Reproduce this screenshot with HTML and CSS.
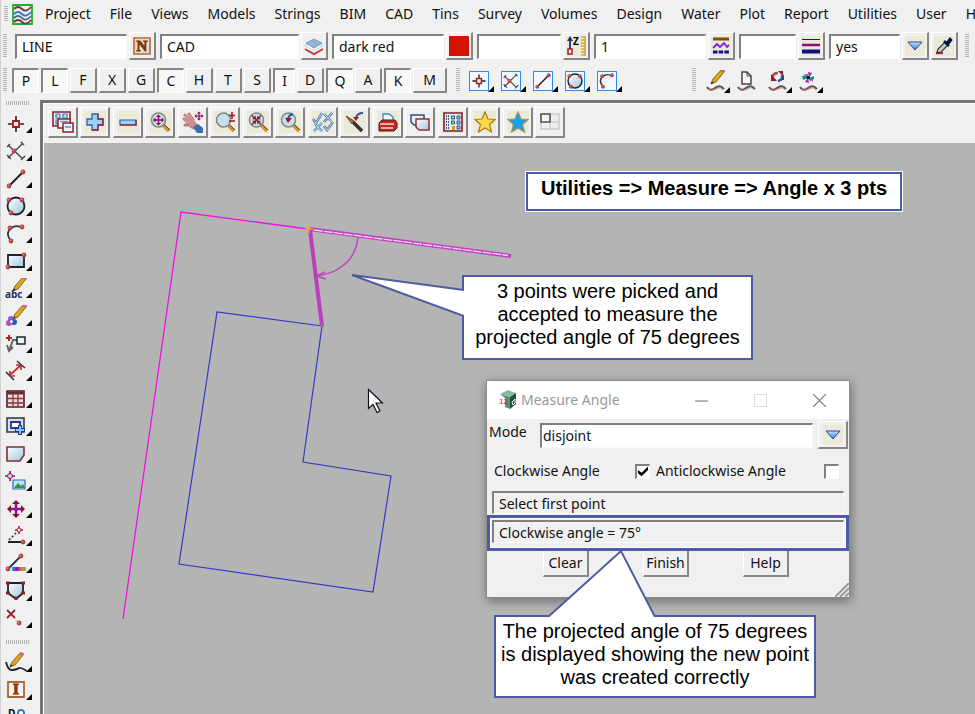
FILE: index.html
```html
<!DOCTYPE html>
<html lang="en">
<head>
<meta charset="utf-8">
<title>Measure Angle</title>
<link rel="stylesheet" href="styles.css">
</head>
<body>
<svg class="sprite" aria-hidden="true">
  <defs>
    <linearGradient id="sky" x1="0" y1="0" x2="1" y2="1"><stop offset="0" stop-color="#fff"/><stop offset="1" stop-color="#9cc4dc"/></linearGradient>
    <linearGradient id="blue" x1="0" y1="0" x2="0" y2="1"><stop offset="0" stop-color="#c4e0ff"/><stop offset="1" stop-color="#3a78e0"/></linearGradient>
    <linearGradient id="rainbow"><stop offset="0" stop-color="#20a0ff"/><stop offset=".35" stop-color="#6020c0"/><stop offset=".6" stop-color="#ff5060"/><stop offset="1" stop-color="#40e060"/></linearGradient>
    <g id="pencil"><path d="M2 15l2-5 8-9 3 2-8 10z" fill="#e0a818" stroke="#6a4a10" stroke-width=".8"/><path d="M11 2l1.500-2 4 1.500-2 3z" fill="#d06a70"/><path d="M2 15l.6-2.500 2 1z" fill="#222"/></g>
    <g id="dot"><circle r="2.400" fill="#b04048"/><circle cx="-.6" cy="-.6" r=".9" fill="#d88a8a"/></g>
    <g id="lens"><path d="M14 14l6 6" stroke="#d09030" stroke-width="3.500"/><path d="M15 13l6 6" stroke="#604020" stroke-width="1"/><circle cx="9.500" cy="9" r="7" fill="#c9dfe8" stroke="#7a8a90" stroke-width="1.600"/></g>
    <g id="wave"><path d="M0 3q3 5 8 1t9 1" fill="none" stroke="#555" stroke-width="2"/><path d="M1 5q3 3 8 0t7 1" fill="none" stroke="#d08080" stroke-width="1"/></g>
    <g id="arrows4"><path d="M-7 0h14M0-7v14" stroke-width="2.500" stroke="#8a1090"/><path d="M-9 0l4-4v8zM9 0l-4-4v8zM0-9l-4 4h8zM0 9l-4-4h8z" fill="#901030"/></g>
  </defs>
  <symbol id="i-logo" viewBox="0 0 21 21"><path fill="#e4f4f2" stroke="#20b030" stroke-width="1.800" d="M1 1h19v19H1z"/><g fill="none" stroke-width="1.800"><path stroke="#803038" d="M2 5q4-4 8 0t9-2M2 18q4-4 8 0t9-2"/><path stroke="#4070c0" d="M2 10q4-4 8 0t9-2"/><path stroke="#507088" d="M2 14q4-4 8 0t9-2"/></g></symbol>
  <symbol id="i-name" viewBox="0 0 20 20"><path fill="#e8eef0" stroke="#b5652f" stroke-width="1.600" d="M2 2h16v16H2z"/><path fill="none" stroke="#e0c8b8" d="M4 4h12v12H4z"/></symbol>
  <symbol id="i-layers" viewBox="0 0 20 20"><path fill="#fff" d="M1 13l9-4 9 4-9 5z"/><path fill="none" stroke="#d0303a" stroke-width="2" d="M1 13l9 5 9-5"/><path fill="#f0f8ff" stroke="#c0d4e8" d="M1 10l9-4 9 4-9 5z"/><path fill="#93b4d8" stroke="#7e9bbd" d="M2 7l8-4 8 4-8 5z"/></symbol>
  <symbol id="i-red" viewBox="0 0 20 20"><path fill="#d41200" d="M0 0h20v20H0z"/></symbol>
  <symbol id="i-height" viewBox="0 0 20 20"><path d="M4 3v10" stroke="#1b3380" stroke-width="1.800"/><path d="M4 0L1 5h6z" fill="#1b3380"/><path d="M2 13h4v5H2z" fill="#fff" stroke="#a02020" stroke-width="1.500"/><path d="M15 0h4v20h-4z" fill="#ffe9a0"/><path d="M19 0v20M15 1h3M15 4h3M15 7h3M15 10h3M15 13h3M15 16h3M15 19h3" stroke="#b88a20" stroke-width="1.200"/></symbol>
  <symbol id="i-linestyle" viewBox="0 0 20 20"><path d="M2 3h16" stroke="#8b4a10" stroke-width="3"/><path d="M2 12l4-4 3 3 4-4 3 4 2-2" fill="none" stroke="#7d1cf0" stroke-width="1.800"/><path d="M2 16h16" stroke="#101090" stroke-width="3" stroke-dasharray="4.500 1.200"/></symbol>
  <symbol id="i-weight" viewBox="0 0 20 20"><path d="M1 3.500h18" stroke="#222"/><path d="M1 9h18" stroke="#8a0a80" stroke-width="2.500"/><path d="M1 15.500h18" stroke="#101080" stroke-width="4"/></symbol>
  <symbol id="i-down" viewBox="0 0 20 20"><path d="M3 6h14l-7 8z" fill="url(#blue)" stroke="#28489c"/></symbol>
  <symbol id="i-dropper" viewBox="0 0 20 20"><path d="M2 17h7" stroke="#c03030" stroke-width="2.500"/><path d="M3 17l1-4 7-7 3 3-7 7z" fill="#b8d0d8" stroke="#333" stroke-width="1.200"/><path d="M10 5l5 5M13 7l3-4 1 1-3 4z" stroke="#101040" stroke-width="2.500" fill="#101040"/></symbol>

  <symbol id="i-point" viewBox="0 0 22 22"><path d="M11 3v16M3 11h16" stroke="#222" stroke-width="1.600"/><path fill="#f4f4f4" stroke="#a81818" stroke-width="1.800" d="M8 8h6v6H8z"/></symbol>
  <symbol id="i-cross" viewBox="0 0 22 22"><path d="M3 5l15 14M18 3L3 18M2 7l3-3M16 2l3 3M2 15l4 4M16 20l4-4" stroke="#444" stroke-width="1.400"/><use href="#dot" x="9" y="11"/></symbol>
  <symbol id="i-line" viewBox="0 0 22 22"><path d="M4 18L18 4" stroke="#222" stroke-width="2"/><use href="#dot" x="4" y="18"/><use href="#dot" x="18" y="4"/></symbol>
  <symbol id="i-circle" viewBox="0 0 22 22"><circle cx="11" cy="11" r="8.500" fill="url(#sky)" stroke="#222" stroke-width="1.800"/><use href="#dot" x="4" y="5"/><use href="#dot" x="17" y="5"/><use href="#dot" x="6" y="18"/></symbol>
  <symbol id="i-arc" viewBox="0 0 22 22"><path d="M6 18Q-1 9 8 4q5-2 9 1z" fill="#e8f2fa"/><path d="M6 18Q-1 9 8 4q5-2 9 1" fill="none" stroke="#333" stroke-width="1.800"/><use href="#dot" x="6" y="18"/><use href="#dot" x="5" y="5"/><use href="#dot" x="17" y="4"/></symbol>
  <symbol id="i-rect" viewBox="0 0 22 22"><path d="M3 5h16v12H3z" fill="url(#sky)" stroke="#222" stroke-width="1.800"/><use href="#dot" x="3" y="17"/><use href="#dot" x="19" y="5"/></symbol>
  <symbol id="i-text" viewBox="0 0 22 22"><g transform="translate(6 -2)"><use href="#pencil"/></g></symbol>
  <symbol id="i-paint" viewBox="0 0 22 22"><g transform="translate(6 -1)"><use href="#pencil"/></g><circle cx="6" cy="14" r="3" fill="#8060e0"/><circle cx="9" cy="17" r="3" fill="#3050c0"/><circle cx="4" cy="18" r="3" fill="#b050c0"/><circle cx="6.500" cy="16.500" r="1.500" fill="#fff"/></symbol>
  <symbol id="i-leader" viewBox="0 0 22 22"><path d="M4 2v6M1 5h6" stroke="#b02030" stroke-width="2"/><path d="M12 7H8l-4 11M2 12l2 6 4-4" fill="none" stroke="#666" stroke-width="2"/><path d="M12 4h8v7h-8z" fill="#e4f2f8" stroke="#222" stroke-width="1.500"/></symbol>
  <symbol id="i-dim" viewBox="0 0 22 22"><path d="M1 12l8 8M12 1l8 7" stroke="#333" stroke-width="1.600"/><path d="M5 15L16 5M5 11v5h5M11 5h5v5" fill="none" stroke="#c03030" stroke-width="1.700"/></symbol>
  <symbol id="i-table" viewBox="0 0 22 22"><path d="M2 3h17v16H2z" fill="#eed8dc" stroke="#4a2028" stroke-width="1.600"/><path d="M2 5h17" stroke="#6a2830" stroke-width="3"/><path d="M8 6v13M13 6v13M2 10.500h17M2 15h17" stroke="#8a3540" stroke-width="1.300"/></symbol>
  <symbol id="i-frame" viewBox="0 0 22 22"><path d="M2 3h17v14H2z" fill="#cfe3ec" stroke="#333" stroke-width="1.500"/><path d="M6 7h9v6H6z" fill="#fff" stroke="#3030a0" stroke-width="1.800"/><path d="M15 10v10M10 15h10" stroke="#223c80" stroke-width="4"/><path d="M15 11v8M11 15h8" stroke="#80c8ff" stroke-width="2"/></symbol>
  <symbol id="i-poly" viewBox="0 0 22 22"><path d="M2 4h17v8l-4 6H2z" fill="url(#sky)" stroke="#803038" stroke-width="1.600"/></symbol>
  <symbol id="i-image" viewBox="0 0 22 22"><path d="M5 1v10M0 6h10" stroke="#902040" stroke-width="1.700"/><circle cx="5" cy="6" r="2.500" fill="#c0d0f0" stroke="#902040"/><path d="M8 10h12v9H8z" fill="#b8e4ff" stroke="#3868b0" stroke-width="1.200"/><path d="M9 18l4-5 3 3 2-2 2 4z" fill="#2a9a40"/></symbol>
  <symbol id="i-move" viewBox="0 0 22 22"><use href="#arrows4" x="11" y="11"/></symbol>
  <symbol id="i-bearing" viewBox="0 0 22 22"><path d="M3 17h15" stroke="#222" stroke-width="2"/><path d="M4 15l8-8" stroke="#222" stroke-width="1.500" stroke-dasharray="2 2"/><path d="M14 1v8M10 5h8" stroke="#a02030" stroke-width="1.500"/><circle cx="14" cy="5" r="2" fill="#fff" stroke="#a02030"/><use href="#dot" x="18" y="17"/></symbol>
  <symbol id="i-gradient" viewBox="0 0 22 22"><path d="M3 16L16 3" stroke="#333" stroke-width="1.800"/><use href="#dot" x="3" y="16"/><use href="#dot" x="16" y="3"/><path d="M7 14h14v4H7z" fill="url(#rainbow)"/></symbol>
  <symbol id="i-shield" viewBox="0 0 22 22"><path d="M3 3h15v10l-7 6-8-6z" fill="url(#sky)" stroke="#222" stroke-width="1.800"/><path d="M1 3h4M16 3h4M1 13h4M16 13h4M9 18h4" stroke="#902030" stroke-width="3"/></symbol>
  <symbol id="i-delpoint" viewBox="0 0 22 22"><path d="M2 2l8 8M10 2l-8 8" stroke="#a02030" stroke-width="1.800"/><path d="M8 9l6 6" stroke="#888" stroke-dasharray="1 1"/><use href="#dot" x="14" y="15"/></symbol>
  <symbol id="i-sketch" viewBox="0 0 22 22"><g transform="translate(3 0)"><use href="#pencil"/></g><path d="M1 10q2 9 7 8t6-2 8 3" fill="none" stroke="#222" stroke-width="1.800"/></symbol>
  <symbol id="i-insert" viewBox="0 0 22 22"><path d="M3 3h16v15H3z" fill="#eef6f8" stroke="#b5652f" stroke-width="1.800"/></symbol>

  <symbol id="i-wpencil" viewBox="0 0 22 22"><g transform="translate(3 -1)"><use href="#pencil"/></g><use href="#wave" x="1" y="14"/></symbol>
  <symbol id="i-wpage" viewBox="0 0 22 22"><path d="M5 2h5l4 4v8H5z" fill="#f4f8fa" stroke="#444" stroke-width="1.500"/><path d="M10 2v4h4" fill="none" stroke="#444"/><use href="#wave" x="1" y="14"/></symbol>
  <symbol id="i-wswap" viewBox="0 0 22 22"><path d="M5 7q0-4 5-4" fill="none" stroke="#b04848" stroke-width="2.500"/><path d="M14 5q1 5-4 6" fill="none" stroke="#305898" stroke-width="2.500"/><path d="M3 4v7h6zM10 1h5v5z" fill="#901c24"/><path d="M16 4v6h-3z" fill="#204888"/><use href="#wave" x="1" y="14"/></symbol>
  <symbol id="i-wspin" viewBox="0 0 22 22"><path d="M9 2l4 1-3 5zM10 13l-4-1 3-5z" fill="#b020b0"/><path d="M5 4h4v4zM10 8h4v4z" fill="#c050c0"/><path d="M3 6l5-1 1 3-5 2zM15 9l-4 2-2-3 6-2z" fill="#109090"/><circle cx="9.300" cy="7.500" r="1.600"/><use href="#wave" x="1" y="14"/></symbol>

  <symbol id="i-views" viewBox="0 0 22 22"><path d="M1 1h17v14H1z" fill="#e8f2f8" stroke="#902028" stroke-width="1.600"/><path d="M4 3h4v4H4zM11 3h4v4h-4zM4 9h4v4H4z" fill="#c4e0f8" stroke="#4878b8" stroke-width="1.200"/><path d="M6 8h12v9H6z" fill="#fff" stroke="#902028" stroke-width="1.500"/><path d="M11 12h10v9H11z" fill="#e8f4fc" stroke="#902028" stroke-width="1.500"/><path d="M13 16h6M8 10.500h8" stroke="#6890c0" stroke-width="1.400"/></symbol>
  <symbol id="i-plus" viewBox="0 0 22 22"><path d="M8 3h6v5h5v6h-5v5H8v-5H3V8h5z" fill="#9cd0f6" stroke="#3060a0" stroke-width="1.300"/><path d="M14 3v5h5v6h-5v5H8" fill="none" stroke="#903040" stroke-width="1.300"/></symbol>
  <symbol id="i-minus" viewBox="0 0 22 22"><path d="M3 9h16v5H3z" fill="#9cd0f6" stroke="#3060a0" stroke-width="1.200"/><path d="M19 9v5H3" fill="none" stroke="#903040" stroke-width="1.500"/></symbol>
  <symbol id="i-zoomall" viewBox="0 0 22 22"><use href="#lens"/><g transform="translate(9.500 9) scale(.62)"><use href="#arrows4"/></g></symbol>
  <symbol id="i-pan" viewBox="0 0 22 22"><path d="M2 8l5 4M3 4l6 6M7 3l4 6M3 14h6" stroke="#b88078" stroke-width="3" stroke-linecap="round"/><path d="M6 9l5-1 5 6-4 5-5-3z" fill="#c89088"/><path d="M3 4.500l6 6M7 3.500l4 6M2.500 8.500l5 4" stroke="#e4b8ac" stroke-width="1"/><path d="M11 16l5-3 5 4v5h-6z" fill="#3c6cae"/><g transform="translate(17 5) scale(.5)"><use href="#arrows4"/></g></symbol>
  <symbol id="i-zoompm" viewBox="0 0 22 22"><use href="#lens"/><path d="M18 1v7M15 4.500h6M15 10h6" stroke="#a01828" stroke-width="1.600"/></symbol>
  <symbol id="i-zoomin" viewBox="0 0 22 22"><use href="#lens"/><path d="M5 4.500l9 9M14 4.500l-9 9" stroke="#a01828" stroke-width="1.300"/><path d="M8.800 8.300V4.500L5 8.300zM10.200 8.300V4.500L14 8.300zM8.800 9.700v3.800L5 9.700zM10.200 9.700v3.800L14 9.700z" fill="#901020"/></symbol>
  <symbol id="i-zoomprev" viewBox="0 0 22 22"><use href="#lens"/><path d="M14 3q-5 1-5 6" fill="none" stroke="#3050a0" stroke-width="2"/><path d="M6 7l3 5 4-5z" fill="#a01828"/></symbol>
  <symbol id="i-ticks" viewBox="0 0 22 22"><path id="tk" d="M1 8l3 4 6-10M12 3l7 7M20 2l-8 9M3 13l7 7M10 12l-8 8M12 15l3 4 6-8" fill="none" stroke="#385c98" stroke-width="2.400"/><path d="M1 8l3 4 6-10M12 3l7 7M20 2l-8 9M3 13l7 7M10 12l-8 8M12 15l3 4 6-8" fill="none" stroke="#a8d8f8" stroke-width="1.100"/></symbol>
  <symbol id="i-brush" viewBox="0 0 22 22"><path d="M9 11l9 9" stroke="#333" stroke-width="3.500"/><path d="M2 5l8 5-2 3z" fill="#b07840" stroke="#604020"/><path d="M19 2q-6 0-7 5" fill="none" stroke="#3050a0" stroke-width="2"/><path d="M9 6l3 4 3-4z" fill="#a01828"/></symbol>
  <symbol id="i-print" viewBox="0 0 22 22"><path d="M6 11V3h6l4 3v5z" fill="#f0f8ff" stroke="#4080d0" stroke-width="1.300"/><path d="M2 12l3-3h13l2 3v5l-3 3H2z" fill="#c02828" stroke="#601010"/><path d="M3 13h14M4 17h12" stroke="#f8e0d0" stroke-width="1.500"/></symbol>
  <symbol id="i-copyview" viewBox="0 0 22 22"><path d="M2 4h13v10H5l-3-3z" fill="#e4f2fa" stroke="#384878" stroke-width="1.500"/><path d="M7 8h13v11H10l-3-3z" fill="url(#sky)" stroke="#903040" stroke-width="1.500"/></symbol>
  <symbol id="i-building" viewBox="0 0 22 22"><path d="M2 2h18v18H2z" fill="#e4f0f0" stroke="#802028" stroke-width="1.600"/><path d="M9.500 5h3v3h-3zM15 5h3v3h-3zM9.500 10h3v3h-3zM15 10h3v3h-3zM15 15h3v3h-3z" fill="#a8d0e0" stroke="#305080"/><path d="M4 5h3M4 8h3M4 11h3M4 14h3M4 17h3" stroke="#405878" stroke-dasharray="1 1" stroke-width="2"/><path d="M10 15h3v4h-3z" fill="#d8a020"/></symbol>
  <symbol id="i-star" viewBox="0 0 22 22"><path d="M11 1l3 7 7 .5-5.500 5 2 7.500-6.500-4-6.500 4 2-7.500L1 8.500 8 8z" fill="#ffd848" stroke="#b07818" stroke-width="1.200"/></symbol>
  <symbol id="i-bluestar" viewBox="0 0 22 22"><path d="M11 1l3 7 7 .5-5.500 5 2 7.500-6.500-4-6.500 4 2-7.500L1 8.500 8 8z" fill="#18a0e8" stroke="#a09060" stroke-width="1.200"/></symbol>
  <symbol id="i-grid" viewBox="0 0 22 22"><path d="M2 3h18v15H2zM11 3v15M2 11h18" fill="#eee" stroke="#ccc" stroke-width="1.500"/><path d="M2 3h9v8H2z" fill="#f4f4f4" stroke="#555" stroke-width="1.600"/></symbol>
  <symbol id="i-app" viewBox="0 0 18 20"><path d="M1 4l8-4 8 3-6 4z" fill="#8cb8a0"/><path d="M1 4l10 3v12l-5-2V8z" fill="#57907a"/><path d="M11 7l6-4v11l-6 5z" fill="#28503e"/><path d="M13 12l3-3v4l-2 2z" fill="none" stroke="#fff"/></symbol>
</svg>

<div class="app">
  <nav class="menubar" aria-label="Main menu">
    <span class="grip"></span>
    <svg class="logo"><use href="#i-logo"/></svg>
    <div class="menus">
      <button>Project</button><button>File</button><button>Views</button><button>Models</button><button>Strings</button><button>BIM</button><button>CAD</button><button>Tins</button><button>Survey</button><button>Volumes</button><button>Design</button><button>Water</button><button>Plot</button><button>Report</button><button>Utilities</button><button>User</button><button>Help</button>
    </div>
  </nav>

  <div class="bar fields">
    <span class="grip"></span>
    <div class="combo"><input class="field wide" aria-label="Name" value="LINE"><button class="raised pick" aria-label="Pick name"><svg><use href="#i-name"/><text x="10" y="15" text-anchor="middle" class="glyph-serif">N</text></svg></button></div>
    <div class="combo"><input class="field widest" aria-label="Model" value="CAD"><button class="raised pick" aria-label="Pick model"><svg><use href="#i-layers"/></svg></button></div>
    <div class="combo"><input class="field wide" aria-label="Colour" value="dark red"><button class="raised pick" aria-label="Pick colour"><svg><use href="#i-red"/></svg></button></div>
    <div class="combo"><input class="field medium" aria-label="Height"><button class="raised pick cream" aria-label="Pick height"><svg><use href="#i-height"/><text x="7" y="9" class="glyph-bold">Z</text></svg></button></div>
    <div class="combo"><input class="field wide" aria-label="Line style" value="1"><button class="raised pick cream" aria-label="Pick line style"><svg><use href="#i-linestyle"/></svg></button></div>
    <div class="combo"><input class="field narrow" aria-label="Weight"><button class="raised pick cream" aria-label="Pick weight"><svg><use href="#i-weight"/></svg></button></div>
    <div class="combo"><input class="field small" aria-label="Tinable" value="yes"><button class="raised pick cream" aria-label="Choose tinable"><svg><use href="#i-down"/></svg></button><button class="raised pick cream" aria-label="Sample"><svg><use href="#i-dropper"/></svg></button></div>
    <span class="grip"></span>
  </div>

  <div class="bar snaps">
    <span class="grip"></span>
    <div class="toggles">
      <button class="raised on">P</button><button class="raised on">L</button><button class="raised">F</button><button class="raised">X</button><button class="raised">G</button><button class="raised on">C</button><button class="raised">H</button><button class="raised">T</button><button class="raised">S</button><button class="raised on slim">I</button><button class="raised">D</button><button class="raised on">Q</button><button class="raised">A</button><button class="raised on">K</button><button class="raised broad">M</button>
    </div>
    <span class="grip"></span>
    <div class="shapes">
      <button class="tool boxed more" aria-label="Point"><svg><use href="#i-point"/></svg></button>
      <button class="tool boxed more" aria-label="Intersection"><svg><use href="#i-cross"/></svg></button>
      <button class="tool boxed more" aria-label="Line"><svg><use href="#i-line"/></svg></button>
      <button class="tool boxed more" aria-label="Circle"><svg><use href="#i-circle"/></svg></button>
      <button class="tool boxed more" aria-label="Arc"><svg><use href="#i-arc"/></svg></button>
    </div>
    <span class="grip"></span>
    <div class="edits">
      <button class="tool more" aria-label="Edit string"><svg><use href="#i-wpencil"/></svg></button>
      <button class="tool" aria-label="New string"><svg><use href="#i-wpage"/></svg></button>
      <button class="tool more" aria-label="Swap string"><svg><use href="#i-wswap"/></svg></button>
      <button class="tool more" aria-label="Rotate string"><svg><use href="#i-wspin"/></svg></button>
    </div>
  </div>

  <div class="main">
    <aside class="palette">
      <span class="grip flat"></span>
      <div class="tools">
        <button class="tool more" aria-label="Point"><svg><use href="#i-point"/></svg></button>
        <button class="tool more" aria-label="Intersection"><svg><use href="#i-cross"/></svg></button>
        <button class="tool more" aria-label="Line"><svg><use href="#i-line"/></svg></button>
        <button class="tool more" aria-label="Circle"><svg><use href="#i-circle"/></svg></button>
        <button class="tool more" aria-label="Arc"><svg><use href="#i-arc"/></svg></button>
        <button class="tool more" aria-label="Rectangle"><svg><use href="#i-rect"/></svg></button>
        <button class="tool more" aria-label="Text"><svg><use href="#i-text"/><text x="0" y="20" class="glyph-abc">abc</text></svg></button>
        <button class="tool more" aria-label="Symbol"><svg><use href="#i-paint"/></svg></button>
        <button class="tool more" aria-label="Leader"><svg><use href="#i-leader"/></svg></button>
        <button class="tool more" aria-label="Dimension"><svg><use href="#i-dim"/></svg></button>
        <button class="tool more" aria-label="Table"><svg><use href="#i-table"/></svg></button>
        <button class="tool more" aria-label="Viewport"><svg><use href="#i-frame"/></svg></button>
        <button class="tool more" aria-label="Polygon"><svg><use href="#i-poly"/></svg></button>
        <button class="tool more" aria-label="Image"><svg><use href="#i-image"/></svg></button>
        <button class="tool more" aria-label="Move"><svg><use href="#i-move"/></svg></button>
        <button class="tool more" aria-label="Bearing"><svg><use href="#i-bearing"/></svg></button>
        <button class="tool more" aria-label="Colour"><svg><use href="#i-gradient"/></svg></button>
        <button class="tool more" aria-label="Boundary"><svg><use href="#i-shield"/></svg></button>
        <button class="tool more" aria-label="Delete point"><svg><use href="#i-delpoint"/></svg></button>
      </div>
      <span class="grip flat"></span>
      <div class="tools">
        <button class="tool more" aria-label="Sketch"><svg><use href="#i-sketch"/></svg></button>
        <button class="tool more" aria-label="Insert"><svg><use href="#i-insert"/><text x="11" y="15" text-anchor="middle" class="glyph-serif">I</text></svg></button>
        <button class="tool" aria-label="Design"><svg><text x="3" y="10" class="glyph-bold">D</text><circle cx="16" cy="6" r="3" fill="#fff" stroke="#3080c0" stroke-width="2"/></svg></button>
      </div>
    </aside>

    <section class="view">
      <div class="viewbar">
        <button class="raised" aria-label="Views"><svg><use href="#i-views"/></svg></button>
        <button class="raised cream" aria-label="Add model"><svg><use href="#i-plus"/></svg></button>
        <button class="raised cream" aria-label="Remove model"><svg><use href="#i-minus"/></svg></button>
        <button class="raised cream" aria-label="Fit"><svg><use href="#i-zoomall"/></svg></button>
        <button class="raised" aria-label="Pan"><svg><use href="#i-pan"/></svg></button>
        <button class="raised cream" aria-label="Zoom"><svg><use href="#i-zoompm"/></svg></button>
        <button class="raised cream" aria-label="Shrink"><svg><use href="#i-zoomin"/></svg></button>
        <button class="raised cream" aria-label="Previous view"><svg><use href="#i-zoomprev"/></svg></button>
        <button class="raised cream" aria-label="Toggles"><svg><use href="#i-ticks"/></svg></button>
        <button class="raised cream" aria-label="Redraw"><svg><use href="#i-brush"/></svg></button>
        <button class="raised cream" aria-label="Print"><svg><use href="#i-print"/></svg></button>
        <button class="raised" aria-label="Copy view"><svg><use href="#i-copyview"/></svg></button>
        <button class="raised cream" aria-label="Properties"><svg><use href="#i-building"/></svg></button>
        <button class="raised cream" aria-label="Favourites"><svg><use href="#i-star"/></svg></button>
        <button class="raised cream" aria-label="Shared favourites"><svg><use href="#i-bluestar"/></svg></button>
        <button class="raised" aria-label="Layout"><svg><use href="#i-grid"/></svg></button>
      </div>

      <div class="canvas">
        <svg class="plan" aria-hidden="true">
          <g fill="none" transform="translate(-44 -143)">
            <path d="M123 619L181 212L308 229" stroke="#f010e8" stroke-width="1.300"/>
            <path d="M322 326L217 312L179 564L373 592L391 476L303 462Z" stroke="#3838c8" stroke-width="1.200"/>
            <path d="M309 229L511 256" stroke="#c040c0" stroke-width="4"/>
            <path d="M314 230L508 255.500" stroke="#f8d8f8" stroke-width="1.300" stroke-dasharray="9 1"/>
            <path d="M310 230L322 326" stroke="#b840b8" stroke-width="4"/>
            <path d="M358 237Q356 257 341 267Q332 274 316 276" stroke="#b848b8" stroke-width="1.500"/>
            <path d="M325 272l-9 4 10 3" stroke="#b848b8" stroke-width="1.500"/>
            <path d="M309 225v8M305 229h8" stroke="#f0b020" stroke-width="1.300"/>
            <path d="M321 325h3v2h-3z" fill="#5090d0"/>
            <path d="M368.500 389.500v19l4.500-4 4 8 3-1.500-4-8h6.500z" fill="#fff" stroke="#101020" stroke-width="1.200"/>
          </g>
        </svg>

        <div class="note heading">Utilities =&gt; Measure =&gt; Angle x 3 pts</div>

        <div class="note picked">
          <svg class="tail" viewBox="0 0 114 48" aria-hidden="true"><path d="M114 17L2 2L114 43" /></svg>
          3 points were picked and<br>accepted to measure the<br>projected angle of 75 degrees
        </div>

        <form class="dialog" onsubmit="return false">
          <header class="titlebar">
            <svg class="appicon"><use href="#i-app"/><text x="0" y="14" class="glyph-12">12</text></svg>
            <h1>Measure Angle</h1>
            <div class="winbtns">
              <button type="button" aria-label="Minimise"><svg viewBox="0 0 12 12"><path d="M0 6.500h12" stroke="#777"/></svg></button>
              <button type="button" aria-label="Maximise" disabled><svg viewBox="0 0 12 12"><path d="M.5.5h11v11H.5z" stroke="#ddd"/></svg></button>
              <button type="button" aria-label="Close"><svg viewBox="0 0 12 12"><path d="M0 0l12 12M12 0L0 12" stroke="#777"/></svg></button>
            </div>
          </header>
          <div class="mode">
            <label for="mode">Mode</label>
            <input id="mode" class="field" value="disjoint">
            <button type="button" class="raised pick cream" aria-label="Choose mode"><svg><use href="#i-down"/></svg></button>
          </div>
          <div class="checks">
            <label for="cw">Clockwise Angle</label><input type="checkbox" id="cw" checked>
            <label for="acw">Anticlockwise Angle</label><input type="checkbox" id="acw">
          </div>
          <input class="field status" aria-label="Prompt" value="Select first point" readonly>
          <div class="highlight"><input class="field status" aria-label="Result" value="Clockwise angle = 75°" readonly></div>
          <footer class="actions">
            <button type="button" class="raised">Clear</button>
            <button type="button" class="raised">Finish</button>
            <button type="button" class="raised">Help</button>
          </footer>
          <svg class="sizer" viewBox="0 0 14 14" aria-hidden="true"><path d="M0 14L14 0M5 14l9-9M10 14l4-4"/></svg>
        </form>

        <div class="note result">
          <svg class="tail" viewBox="0 0 112 68" aria-hidden="true"><path d="M3 68L76 2L110 68" /></svg>
          The projected angle of 75 degrees<br>is displayed showing the new point<br>was created correctly
        </div>
      </div>
    </section>
  </div>
</div>
</body>
</html>
```

FILE: styles.css
```css
* { box-sizing: border-box; }

body {
  margin: 0;
  background: #f0f0f0;
  color: #111;
  font: 14px/20px "Noto Sans", "Open Sans", sans-serif;
  overflow: hidden;
}

button, input {
  font: inherit;
  color: inherit;
  margin: 0;
  padding: 0;
}

button { background: none; border: 0; }

.sprite { position: absolute; width: 0; height: 0; }

.glyph-serif { font: bold 15px "Liberation Serif", serif; fill: #8a3600; stroke: #8a3600; }
.glyph-bold { font: bold 10px "Open Sans", sans-serif; }
.glyph-abc { font: bold 10px "Open Sans", sans-serif; fill: #22305a; }
.glyph-12 { font: 8px "Liberation Sans", sans-serif; fill: #d02030; }

.app {
  display: flex;
  flex-direction: column;
  height: 100vh;
  border-left: 1px solid #d0d0d0;
}

/* drag handles */
.grip {
  flex: none;
  width: 4px;
  height: 24px;
  background: repeating-linear-gradient(#b4b4b4 0 1px, #f0f0f0 1px 2px);
}
.grip.flat {
  width: 24px;
  height: 4px;
  background: repeating-linear-gradient(90deg, #b4b4b4 0 1px, #f0f0f0 1px 2px);
}

/* menu */
.menubar {
  display: flex;
  align-items: center;
  flex: none;
  height: 28px;
  margin-bottom: 1px;
  padding-left: 3px;
}
.menubar .grip { height: 16px; }
.logo { flex: none; width: 21px; height: 21px; margin-left: 4px; }
.menus {
  display: flex;
  flex: 1;
  gap: 19px;
  margin-left: 12px;
  overflow: hidden;
  white-space: nowrap;
}

/* bevelled parts */
.raised {
  display: flex;
  flex: none;
  align-items: center;
  justify-content: center;
  background: #f0f0f0;
  border: 1px solid #fff;
  border-right: 2px solid #868686;
  border-bottom: 2px solid #868686;
}
.raised.on {
  background: #f8f8f8;
  border: 1px solid #fff;
  border-top: 2px solid #868686;
  border-left: 2px solid #868686;
}
.cream svg { background: #ece9d8; }
.field {
  background: #fff;
  border: 1px solid #fafafa;
  border-top: 2px solid #808080;
  border-left: 2px solid #808080;
  border-radius: 0;
  height: 25px;
  padding: 0 5px;
  outline: 0;
}

.bar {
  display: flex;
  align-items: center;
  flex: none;
  height: 34px;
  padding-left: 2px;
  overflow: hidden;
}

.fields { gap: 4px; }
.fields .grip { margin-right: 4px; }
.combo { display: flex; flex: none; align-items: center; gap: 2px; }
.wide { width: 112px; }
.widest { width: 139px; }
.medium { width: 84px; }
.small { width: 71px; }
.narrow { width: 57px; }
.pick { width: 27px; height: 28px; }
.pick svg { width: 20px; height: 20px; }
.combo + .grip { margin-left: 3px; }

.snaps { height: 37px; padding-bottom: 3px; }
.toggles { display: flex; gap: 2px; margin: 0 9px 0 5px; }
.toggles .raised { width: 27px; height: 25px; }
.toggles .slim { width: 22px; }
.toggles .broad { width: 34px; }
.shapes { display: flex; gap: 4px; margin: 2px 67px 0 9px; }
.edits { display: flex; gap: 5px; margin-left: 8px; }

/* flat tool buttons; a corner triangle marks a fly-out */
.tool {
  display: flex;
  flex: none;
  align-items: center;
  position: relative;
  width: 28px;
  height: 27px;
}
.tool svg { width: 22px; height: 22px; }
.boxed svg { width: 20px; height: 20px; border: 1px solid #2a8cf0; background: #f4f8fc; }
.more::after {
  content: "";
  position: absolute;
  right: 0;
  bottom: 4px;
  border: 3px solid #000;
  border-top-color: transparent;
  border-left-color: transparent;
}
.boxed.more::after { right: 3px; bottom: 3px; }
.edits .tool { width: 26px; padding: 2px 0 0 2px; }
.edits .more::after { bottom: 1px; }

/* body */
.main { display: flex; flex: 1; min-height: 0; }
.palette {
  flex: none;
  width: 39px;
  padding: 1px 0 0 3px;
  overflow: hidden;
}
.palette .grip { display: block; margin-left: 2px; }
.palette .tool { padding-left: 1px; }
.tools { padding: 5px 0 8px; }
.tools .tool:nth-child(even) { height: 28px; }

.view {
  display: flex;
  flex-direction: column;
  flex: 1;
  min-width: 0;
  border-top: 3px solid #747474;
  border-left: 3px solid #747474;
}
.viewbar {
  display: flex;
  flex: none;
  gap: 2px;
  padding: 3px 0 5px 4px;
  border: 1px solid #fff;
  border-right: 0;
  border-bottom: 0;
}
.viewbar .raised { width: 30px; height: 31px; }
.viewbar .raised:nth-child(even) { margin-right: 1px; }
.viewbar svg { width: 22px; height: 22px; }

.canvas {
  position: relative;
  flex: 1;
  background: #b4b4b4;
  border-left: 1px solid #fff;
  overflow: hidden;
}
.plan { display: block; width: 100%; height: 100%; }

/* annotations, placed freely over the drawing */
.note {
  position: absolute;
  background: #fff;
  border: 2px solid #4f5aa4;
  color: #000;
  font: 20px/23px "Liberation Sans", Arial, sans-serif;
  text-align: center;
  white-space: nowrap;
}
.heading {
  left: 482px;
  top: 29px;
  width: 376px;
  height: 39px;
  padding-top: 3px;
  font-weight: bold;
  outline: 1px solid #fff;
}
.picked { left: 418px; top: 132px; width: 291px; height: 85px; padding-top: 3px; }
.result { left: 450px; top: 472px; width: 322px; height: 83px; padding-top: 3px; }
.tail { position: absolute; fill: #fff; stroke: #4f5aa4; stroke-width: 2; }
.picked .tail { left: -114px; top: -4px; width: 114px; height: 48px; }
.result .tail { left: 49px; top: -68px; width: 112px; height: 68px; }

/* dialog */
.dialog {
  position: absolute;
  left: 442px;
  top: 237px;
  width: 364px;
  background: #f0f0f0;
  outline: 1px solid #8a8a8a;
  outline-offset: -1px;
  box-shadow: 1px 3px 10px rgba(0, 0, 0, .4);
}
.titlebar {
  display: flex;
  align-items: center;
  height: 38px;
  margin: 1px 1px 0;
  padding: 0 23px 0 12px;
  background: #fff;
}
.appicon { width: 18px; height: 20px; }
.titlebar h1 { flex: 1; margin: 0 0 0 4px; font-size: 14px; font-weight: normal; color: #999; }
.winbtns { display: flex; gap: 46px; }
.winbtns button { display: flex; }
.winbtns svg { width: 13px; height: 13px; fill: none; }

.mode { display: flex; align-items: center; padding: 2px 2px 0 3px; }
.mode label { width: 51px; padding-bottom: 6px; }
.mode .field { flex: 1; min-width: 0; padding: 0 1px; margin-right: 5px; }
.mode .pick { width: 30px; }

.checks { display: flex; align-items: center; padding: 12px 11px 10px 8px; }
.checks label { width: 141px; }
.checks input + label { width: 168px; margin-left: 6px; }
.checks input {
  appearance: none;
  flex: none;
  width: 15px;
  height: 15px;
  background: #fff;
  border: 1px solid #fff;
  border-top: 2px solid #808080;
  border-left: 2px solid #808080;
}
.checks input:checked::before {
  content: "";
  display: block;
  height: 11px;
  background: #000;
  clip-path: polygon(8% 40%, 38% 65%, 92% 10%, 92% 40%, 38% 98%, 8% 70%);
}

.status {
  display: block;
  width: calc(100% - 12px);
  height: 23px;
  margin: 0 6px;
  padding: 0 5px;
  background: #f0f0f0;
}
.highlight { margin: 1px 1px 0; padding: 2px 0 5px; border: 3px solid #4f5aa4; box-shadow: inset 0 0 0 1px #fff; }
.highlight .status { width: calc(100% - 4px); margin: 0 2px; }

.actions { display: flex; gap: 54px; padding: 0 57px 21px; }
.actions .raised { width: 46px; height: 26px; border-top: 0; }
.sizer { position: absolute; right: 1px; bottom: 1px; width: 14px; height: 14px; stroke: #999; stroke-width: 2; }
```
